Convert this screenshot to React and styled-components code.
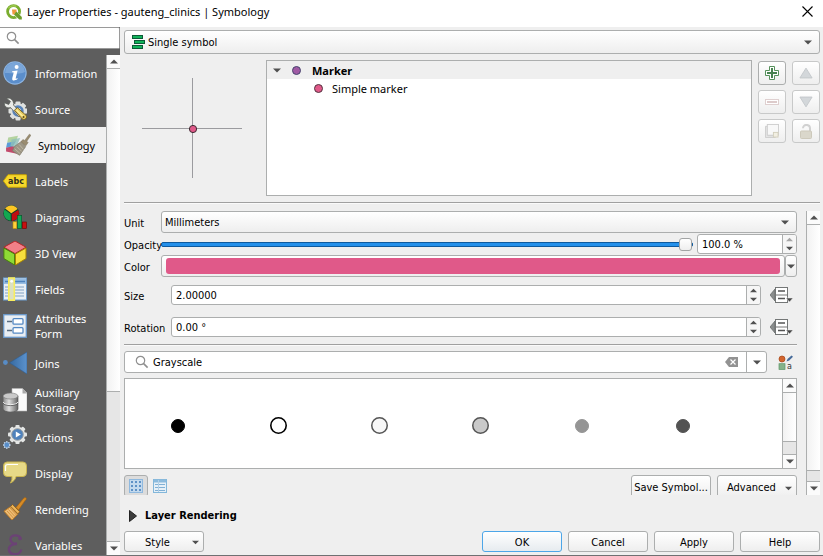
import React from "react";
import styled, { createGlobalStyle, css } from "styled-components";

const UI = '"Noto Sans", "Open Sans", sans-serif';
const FORM = '"DejaVu Sans Condensed", "Noto Sans", sans-serif';
const LINE = "#acaeae";
const FACE = "linear-gradient(#ffffff, #eeeeee)";

const Global = createGlobalStyle`
  *, *::before, *::after { box-sizing: border-box; }
  body { margin: 0; background: #efefef; color: #000; font: 11px/16px ${UI}; }
  button, input, select { font: inherit; color: inherit; margin: 0; }
  svg { display: block; flex: none; }
`;

const Dialog = styled.div`
  display: flex;
  flex-direction: column;
  height: 100vh;
  background: #efefef;
  border-bottom: 1px solid #6f7072;
`;

const TitleBar = styled.header`
  display: flex;
  align-items: center;
  flex: none;
  height: 27px;
  padding: 0 9px 4px 6px;
  gap: 5px;
  background: #fff;
`;

const Title = styled.h1`
  flex: 1;
  margin: 0;
  font-size: 11px;
  font-weight: 400;
`;

const PlainButton = styled.button`
  display: flex;
  align-items: center;
  justify-content: center;
  padding: 0;
  border: 0;
  background: none;
`;

const Body = styled.div`
  display: flex;
  flex: 1;
  min-height: 0;
`;

const Sidebar = styled.aside`
  display: flex;
  flex-direction: column;
  flex: none;
  width: 120px;
  background: #5e5e5e;
`;

const SideSearch = styled.label`
  display: flex;
  align-items: center;
  flex: none;
  height: 22px;
  margin-bottom: 6px;
  padding-left: 6px;
  background: #fff;
  border: 1px solid #9a9a9a;
  border-left: 0;
  border-radius: 0 2px 2px 0;
`;

const BareInput = styled.input`
  flex: 1;
  min-width: 0;
  padding: 2px 0 0;
  border: 0;
  outline: 0;
  background: none;
`;

const NavArea = styled.div`
  display: flex;
  flex: 1;
  min-height: 0;
`;

const NavList = styled.nav`
  flex: 1;
  min-width: 0;
  overflow: hidden;
`;

const NavItem = styled.button`
  display: flex;
  align-items: center;
  gap: ${(p) => (p.$selected ? 7 : 8)}px;
  width: 100%;
  height: ${(p) => (p.$tall ? 38 : 36)}px;
  padding: 0 0 0 ${(p) => (p.$selected ? 5 : 3)}px;
  border: 0;
  background: ${(p) => (p.$selected ? "#f0f0f0" : "transparent")};
  color: ${(p) => (p.$selected ? "#000" : "#fff")};
  line-height: 15px;
  text-align: left;
`;

const NavText = styled.span`
  white-space: pre-line;
`;

const ScrollTrack = styled.div`
  display: flex;
  flex-direction: column;
  flex: none;
  width: 14px;
  background: #e6e6e6;
  border-left: 1px solid ${LINE};
`;

const ScrollStep = styled.button`
  display: flex;
  align-items: center;
  justify-content: center;
  flex: none;
  height: 14px;
  padding: 0;
  border: 0;
  border-${(p) => (p.$down ? "top" : "bottom")}: 1px solid ${LINE};
  background: #fbfbfb;
`;

const ScrollThumb = styled.div`
  flex: ${(p) => p.$grow} 1 0;
  background: linear-gradient(90deg, #f2f2f2, #fff);
  border-bottom: 1px solid ${LINE};
`;

const ScrollRest = styled.div`
  flex: ${(p) => p.$grow} 1 0;
`;

const Main = styled.main`
  display: flex;
  flex-direction: column;
  flex: 1;
  min-width: 0;
  padding: 3px 3px 3px 4px;
  font: 11px/14px ${FORM};
`;

const ComboBox = styled.div`
  display: grid;
  grid-template-columns: 1fr auto;
  align-items: center;
  flex: ${(p) => (p.$grow ? 1 : "none")};
  height: ${(p) => p.$height}px;
  border: 1px solid ${LINE};
  border-radius: 3px;
  background: ${FACE};

  & > * { grid-row: 1; }
`;

const ComboIcon = styled.span`
  grid-column: 1;
  padding-left: 7px;
  pointer-events: none;
`;

const Select = styled.select`
  grid-column: 1 / -1;
  align-self: stretch;
  width: 100%;
  padding: 2px 0 0 ${(p) => (p.$icon ? 23 : 3)}px;
  border: 0;
  outline: 0;
  background: none;
  appearance: none;
`;

const ComboArrow = styled.span`
  grid-column: 2;
  padding-right: 7px;
  pointer-events: none;
`;

const SymbolTop = styled.section`
  display: flex;
  flex: none;
  height: 136px;
  margin: 6px 0;
`;

const Preview = styled.div`
  display: flex;
  align-items: center;
  justify-content: center;
  flex: none;
  width: 142px;
  padding-right: 6px;
`;

const Tree = styled.div`
  flex: 1;
  min-width: 0;
  border: 1px solid ${LINE};
  background: #fff;
  font: 11px/18px ${UI};
`;

const TreeRow = styled.div`
  display: flex;
  align-items: center;
  gap: ${(p) => (p.$child ? 9 : 11)}px;
  height: 18px;
  padding-left: ${(p) => (p.$child ? 47 : 6)}px;
  ${(p) => p.$root && css`background: #efefef; font-weight: 700;`}
`;

const TreeText = styled.span`
  padding-top: 2px;
`;

const ToolGrid = styled.div`
  display: grid;
  grid-template-columns: 28px 28px;
  grid-auto-rows: 24px;
  align-content: start;
  gap: 5px 6px;
  padding: 1px 0 0 6px;
`;

const ToolButton = styled.button`
  display: flex;
  align-items: center;
  justify-content: center;
  padding: 0;
  border: 1px solid ${(p) => (p.disabled ? "#c8c9c9" : LINE)};
  border-radius: 3px;
  background: ${FACE};
`;

const Rule = styled.hr`
  flex: none;
  height: 2px;
  margin: 0;
  border: 0;
  border-top: 1px solid #a0a0a0;
  border-bottom: 1px solid #fafafa;
`;

const ScrollArea = styled.div`
  display: flex;
  flex: 1;
  min-height: 0;
  margin-top: 7px;
  gap: 9px;
`;

const ScrollBody = styled.div`
  display: flex;
  flex-direction: column;
  flex: 1;
  min-width: 0;
  overflow: hidden;
`;

const Field = styled.div`
  display: flex;
  align-items: center;
  flex: none;
  height: ${(p) => p.$height}px;
  margin-bottom: ${(p) => p.$after || 0}px;
`;

const FieldLabel = styled.label`
  flex: none;
  width: ${(p) => (p.$wide ? 47 : 37)}px;
  padding-top: 3px;
  white-space: nowrap;
`;

const Slider = styled.input`
  flex: 1;
  min-width: 0;
  height: 14px;
  margin-right: 4px;
  background: none;
  appearance: none;
  outline: 0;

  &::-webkit-slider-runnable-track {
    height: 5px;
    border: 1px solid #0e5a9e;
    border-radius: 2px;
    background: #2490ea;
  }
  &::-webkit-slider-thumb {
    appearance: none;
    width: 13px;
    height: 13px;
    margin-top: -5px;
    border: 1px solid #a2a4a4;
    border-radius: 3px;
    background: ${FACE};
  }
`;

const Spin = styled.div`
  display: flex;
  flex: ${(p) => (p.$compact ? "none" : 1)};
  width: ${(p) => (p.$compact ? "100px" : "auto")};
  height: 20px;
  border: 1px solid ${LINE};
  border-radius: 3px;
  background: #fff;
  padding-left: 4px;
`;

const SpinSteps = styled.div`
  display: flex;
  flex-direction: column;
  width: 14px;
  border-left: 1px solid ${LINE};
  background: #f6f6f6;
  border-radius: 0 2px 2px 0;
`;

const Step = styled(PlainButton)`
  flex: 1;
`;

const ColorButton = styled.button`
  flex: 1;
  height: 22px;
  padding: 2px 4px;
  border: 1px solid ${LINE};
  border-radius: 3px;
  background: ${FACE};
`;

const Swatch = styled.span`
  display: block;
  height: 16px;
  border-radius: 3px;
  background: #e05989;
`;

const ColorMenu = styled(ToolButton)`
  width: 12px;
  height: 22px;
`;

const OverrideButton = styled(PlainButton)`
  width: 36px;
  padding-left: 5px;
`;

const FilterBox = styled.div`
  display: flex;
  align-items: center;
  flex: 1;
  height: 22px;
  padding-left: 10px;
  gap: 4px;
  border: 1px solid ${LINE};
  border-radius: 3px;
  background: #fff;
`;

const FilterDrop = styled(PlainButton)`
  align-self: stretch;
  width: 20px;
  margin-left: 4px;
  border-left: 1px solid ${LINE};
`;

const StyleManager = styled(PlainButton)`
  width: 30px;
  padding-left: 6px;
`;

const Gallery = styled.div`
  display: flex;
  flex: none;
  height: 91px;
  margin-bottom: 6px;
  border: 1px solid ${LINE};
  background: #fff;
`;

const GalleryGrid = styled.div`
  display: grid;
  grid-template-columns: repeat(auto-fill, 101px);
  flex: 1;
  padding: 4px 2px 0;
`;

const Actions = styled.div`
  display: flex;
  flex: none;
  height: 22px;
`;

const ViewToggle = styled.button`
  display: flex;
  align-items: center;
  justify-content: center;
  width: 24px;
  height: 22px;
  padding: 0;
  border: 1px solid ${(p) => (p.$on ? LINE : "transparent")};
  border-radius: 3px;
  background: ${(p) => (p.$on ? "#dcdcdc" : "none")};
`;

const Spacer = styled.span`
  flex: 1;
`;

const ButtonRow = styled.div`
  display: flex;
  gap: 6px;
`;

const PushButton = styled.button`
  display: flex;
  align-items: center;
  justify-content: center;
  width: 80px;
  height: 21px;
  padding: 2px 0 0;
  border: 1px solid ${(p) => (p.$primary ? "#4da6e8" : LINE)};
  border-radius: 3px;
  background: ${(p) => (p.$primary ? "linear-gradient(#fff, #e6ebef)" : FACE)};
  white-space: nowrap;
`;

const MenuButton = styled(PushButton)`
  justify-content: space-between;
  padding: 2px 4px 0 ${(p) => p.$indent}px;
`;

const CutButton = styled(PushButton)`
  height: 24px;
`;

const CutMenuButton = styled(MenuButton)`
  height: 24px;
`;

const Disclosure = styled.button`
  display: flex;
  align-items: center;
  flex: none;
  gap: 8px;
  height: 36px;
  padding: 5px 0 0 5px;
  border: 0;
  background: none;
`;

const GroupTitle = styled.h2`
  margin: 0;
  font: 700 11px/16px ${FORM};
`;

const Footer = styled.footer`
  display: flex;
  flex: none;
  gap: 6px;
`;

const Arrow = ({ up, faded, small }) => (
  <svg width={small ? 7 : 8} height="5" viewBox="0 0 8 5" aria-hidden="true">
    <path d={up ? "M0 4.5 4 .5 8 4.5Z" : "M0 .5H8L4 4.5Z"} fill={faded ? "#a5a5a5" : "#505050"} />
  </svg>
);

const Magnifier = () => (
  <svg width="14" height="14" viewBox="0 0 14 14" fill="none" stroke="#8f8f8f" aria-hidden="true">
    <circle cx="5.5" cy="5.5" r="4.2" strokeWidth="1.2" />
    <path d="m8.6 8.6 4 4" strokeWidth="1.6" />
  </svg>
);

const Glyph = ({ children, size = 24 }) => (
  <svg width={size} height={size} viewBox="0 0 24 24" aria-hidden="true">{children}</svg>
);

const gear = (cx, cy, r, w) => (
  <g>
    {[0, 45, 90, 135].map((a) => (
      <rect key={a} x={cx - w / 2} y={cy - r} width={w} height={2 * r} rx="1" transform={`rotate(${a} ${cx} ${cy})`} />
    ))}
    <circle cx={cx} cy={cy} r={r - 1.8} />
  </g>
);

const icons = {
  info: (
    <Glyph>
      <circle cx="12" cy="12" r="11.7" fill="#8db4e0" />
      <circle cx="12" cy="12" r="10.6" fill="#5b8ecb" />
      <path d="M2 12a10 10 0 0 1 20-1c-6 3-13 1-20 1Z" fill="#7ba6d8" />
      <circle cx="13.6" cy="6" r="2" fill="#fff" />
      <path d="M9.2 10.2 14.6 9.4 12.7 17.2c-.1.7.5.6 1.8-.2v1.1c-2.7 2.2-6 2-5.2-1.1l1.3-5c.2-.8-.2-1-1.6-.8Z" fill="#fff" />
    </Glyph>
  ),
  source: (
    <Glyph>
      <g fill="#dfe1df">{gear(15, 14, 9.5, 5)}</g>
      <circle cx="15" cy="14" r="5.7" fill="#5783ba" />
      <circle cx="15" cy="14" r="3" fill="#ececec" />
      <path d="M3.6 1.4 7.4 4.4 5.7 7.4 1.5 5.8C.4 8.8 4 12 7.5 10.5L16 20l3-2.8L10.5 8C11.5 4 7.3-.2 3.6 1.4Z" fill="#e9eae7" stroke="#565a55" strokeWidth=".8" />
      <path d="m11.4 13.2 3-2.5 8.8 7.8c1.3 2.5-1.3 5.1-4 3.4Z" fill="#ebcf65" stroke="#705b18" strokeWidth=".9" />
      <path d="m13.5 13 7 7" stroke="#fff0a0" strokeWidth="1.3" />
      <circle cx="20.5" cy="20" r="1" fill="#5f4d1b" />
    </Glyph>
  ),
  symbology: (
    <Glyph size={26}>
      <path d="M3 5 12 3.5 10 9 2 10Z" fill="#b4d3a0" />
      <path d="M2 10 10 8.5 7 14 1 14.5Z" fill="#5b9bd8" />
      <path d="M1 14.5 8 13 11 20 1 18Z" fill="#c34a6c" />
      <path d="M6 7 14 5.5 10.5 14 5 13Z" fill="#8fc1b8" opacity=".8" />
      <path d="m8.5 13.5 7-5 3.5 5-5.500 8-6.500-4Z" fill="#9d9685" stroke="#827c6b" strokeWidth=".7" />
      <path d="m9 15.500 5 4.500m-3-6.500 4.500 4.500m-2.500-6.500 4 4.500" stroke="#c9c2ad" strokeWidth=".7" />
      <path d="M14.8 9 16.5 7l1.700.8L22.500 2l1.400 1-3.800 5.500 1.200 1.200-2 3Z" fill="#9a8c70" stroke="#80765f" strokeWidth=".5" />
    </Glyph>
  ),
  labels: (
    <Glyph>
      <path d="M.4 12 5 5.7H23q.8 0 .8.8v11q0 .8-.8.8H5Z" fill="#f5d72b" stroke="#c7a300" strokeWidth=".9" />
      <text x="5" y="15" fontFamily="DejaVu Sans" fontSize="8" fontWeight="700" fill="#2e2d20">abc</text>
    </Glyph>
  ),
  diagrams: (
    <Glyph>
      <circle cx="8.3" cy="8.3" r="8" fill="#123d2c" />
      <path d="M8.3 8.3 2.1 3.5A7.6 7.6 0 0 1 14.6 4Z" fill="#fbc624" />
      <path d="M7.7 9V15.7A7.6 7.6 0 0 1 1.6 4.5Z" fill="#13a750" />
      <path d="M8.8 9 15.2 5A7.6 7.6 0 0 1 8.8 15.9Z" fill="#c00d11" />
      <rect x="10" y="16.8" width="3.8" height="6.8" fill="#ffd13c" stroke="#bb8d00" strokeWidth=".6" />
      <rect x="14.5" y="10.5" width="4.2" height="13" fill="#14a754" stroke="#00552b" strokeWidth=".6" />
      <rect x="19.3" y="17" width="4.2" height="6.5" fill="#c71111" stroke="#6d0000" strokeWidth=".6" />
    </Glyph>
  ),
  cube: (
    <Glyph>
      <path d="M12 0 23 6.2 12 12.6.9 6.2Z" fill="#f28088" stroke="#b3272a" />
      <path d="M.9 7 11.6 13V24L.9 17.6Z" fill="#8edb35" stroke="#487e0d" />
      <path d="M23 7 12.5 13V24L23 17.6Z" fill="#f6df3d" stroke="#a98500" />
    </Glyph>
  ),
  fields: (
    <Glyph>
      <rect x=".5" y="1" width="23" height="22" fill="#e9eff5" stroke="#6d9dcf" />
      <rect x="1" y="1.5" width="22" height="5.5" fill="#97bde3" />
      <path d="M2 4.5h4m6 0h10" stroke="#4f83bd" strokeWidth="1.4" />
      <path d="M2 10h4m6 0h9M2 13h4m6 0h9M2 16h4m6 0h9M2 19h4m6 0h9" stroke="#81a2c4" strokeWidth="1.2" />
      <rect x="5.8" y="1" width="5.5" height="22.2" fill="#dce0c2" stroke="#f8ed5d" strokeWidth="1.6" />
      <circle cx="8.7" cy="4.3" r="1.4" fill="#fff" />
    </Glyph>
  ),
  form: (
    <Glyph>
      <rect x=".7" y=".7" width="22.6" height="22.6" fill="#e9eef3" stroke="#6a99cb" strokeWidth="1.3" />
      <path d="M4 7.5h5M4 16.5h5" stroke="#5a6d80" strokeWidth="1.6" />
      <rect x="10" y="4.7" width="10" height="5.5" rx="1" fill="#fff" stroke="#5388c3" strokeWidth="1.3" />
      <rect x="10" y="13.7" width="10" height="5.5" rx="1" fill="#fff" stroke="#5388c3" strokeWidth="1.3" />
    </Glyph>
  ),
  joins: (
    <Glyph>
      <defs><linearGradient id="join"><stop stopColor="#36699f" /><stop offset="1" stopColor="#5b92ce" /></linearGradient></defs>
      <circle cx="2.4" cy="11.5" r="2.4" fill="#588cc5" />
      <path d="M6.5 11.7 24 1V23Z" fill="url(#join)" stroke="#305e91" strokeWidth=".6" />
    </Glyph>
  ),
  storage: (
    <Glyph>
      <path d="M9 .5H19.5L24 5V23H9Z" fill="#fafafa" stroke="#b6b6b6" strokeWidth=".6" />
      <path d="M19.5.5V5.5H24Z" fill="#aaa" />
      <defs><linearGradient id="disk"><stop stopColor="#898989" /><stop offset=".4" stopColor="#dedede" /><stop offset="1" stopColor="#646464" /></linearGradient></defs>
      <path d="M0 8v13c0 4 15 4 15 0V8Z" fill="url(#disk)" stroke="#4b4b4b" strokeWidth=".6" />
      <ellipse cx="7.5" cy="8" rx="7.5" ry="3" fill="#c9c9c9" stroke="#777" strokeWidth=".6" />
      <path d="M0 14c1 3.5 14 3.5 15 0" fill="none" stroke="#eee" />
      <path d="M0 15c1 3.5 14 3.5 15 0" fill="none" stroke="#555" strokeWidth=".8" />
    </Glyph>
  ),
  actions: (
    <Glyph>
      <g fill="#e4e6e5">{gear(14.5, 9.5, 9.5, 4.2)}</g>
      <circle cx="14.5" cy="9.5" r="5.8" fill="#4f82bc" stroke="#9b9fa1" />
      <path d="m12.8 6.5 5 3-5 3Z" fill="#fff" />
      <g fill="#b9d1eb">{gear(3.8, 20, 3.9, 1.8)}</g>
      <circle cx="3.8" cy="20" r="2.4" fill="#588dc8" />
    </Glyph>
  ),
  display: (
    <Glyph>
      <path d="M4 1H20q3.5 0 3.5 4v6.5q0 4-3.5 4h-7c-.5 3-2.5 5-5.5 6.5q2-3 1.5-6.5H4q-3.5 0-3.5-4V5Q.5 1 4 1Z" fill="#e7d987" stroke="#c8b34e" />
      <path d="M2.5 10V5.5q0-2 2.5-2h10" fill="none" stroke="#fff" strokeWidth="1.2" />
    </Glyph>
  ),
  rendering: (
    <Glyph>
      <path d="M13 10.5 20.7 1.2q1.6-1.3 2.7.3-.1 1.3-1.4 2.2L15.5 13Z" fill="#d68b26" stroke="#aa6106" strokeWidth=".6" />
      <path d="m9.5 7.5 7.2 7.3-1.8 2L7.7 9.4Z" fill="#ebb65d" stroke="#8d5407" strokeWidth=".7" />
      <path d="m7.4 9.8 7.2 7.4L9 23 1 14.2Z" fill="#edbd77" stroke="#be7b23" />
      <path d="m5.4 12.4 6.5 7.1m-8-5.7 6.5 7.3M7 11l6.4 7" stroke="#c78127" strokeWidth=".7" />
    </Glyph>
  ),
  variables: (
    <Glyph>
      <path d="M17.5 5.5C16.5 1.500 8 1 7.500 6c-.2 3.200 2.500 5 6.500 4.800-5.500.2-8.500 2.500-8 6.200.8 5.500 10.500 5.500 12 .5" fill="none" stroke="#6b4275" strokeWidth="2.400" strokeLinecap="round" />
      <circle cx="17" cy="5.500" r="1.800" fill="#6b4275" />
    </Glyph>
  ),
};

const QgisLogo = () => (
  <svg width="16" height="16" viewBox="0 0 16 16" aria-hidden="true">
    <circle cx="7.6" cy="7.6" r="6" fill="none" stroke="#7aad2e" strokeWidth="2.8" />
    <path d="M2.500 4.500A6 6 0 0 1 10.500 2.400" fill="none" stroke="#9dc84e" strokeWidth="1.5" />
    <path d="m10.500 10.500 5 5" stroke="#fff" strokeWidth="4.4" />
    <path d="m8.500 8.500 2-1 5.300 5.500v2.600h-2.600L8 10.500Z" fill="#6c9d2b" />
    <path d="M6 5.500h4.500v1.700L8 10.500H6.500Z" fill="#ee9b3e" />
  </svg>
);

const Dot = ({ size, fill, stroke, width = 1 }) => (
  <svg width={size} height={size} viewBox={`0 0 ${size} ${size}`} aria-hidden="true">
    <circle cx={size / 2} cy={size / 2} r={(size - width) / 2} fill={fill} stroke={stroke} strokeWidth={width} />
  </svg>
);

const Override = () => (
  <svg width="23" height="18" viewBox="0 0 23 18" aria-hidden="true">
    <path d="M5 3v12L0 9Z" fill="#8a8d8d" stroke="#626565" strokeWidth=".7" />
    <rect x="5.5" y="1.5" width="12" height="15" fill="#fff" stroke="#747777" />
    <path d="M8 5h7M8 12.5h7" stroke="#555" strokeWidth="1.4" />
    <path d="M6 9h11" stroke="#777" />
    <path d="M16 12h7l-3.5 4Z" fill="#484848" stroke="#efefef" strokeWidth=".5" />
  </svg>
);

const tools = {
  add: <svg width="14" height="14" viewBox="0 0 14 14"><path d="M4.5.5h5v4h4v5h-4v4h-5v-4h-4v-5h4Z" fill="#fff" stroke="#56915b" /><path d="M7 2v10M2 7h10" stroke="#478250" strokeWidth="2" /></svg>,
  up: <svg width="14" height="12" viewBox="0 0 15 12"><path d="M7.5.8 14 11.3H1Z" fill="#d3d7da" stroke="#c3c7ca" /></svg>,
  remove: <svg width="14" height="6" viewBox="0 0 14 6"><rect x=".5" y=".5" width="13" height="5" fill="#fff" stroke="#dfd0d0" /><path d="M2 3h10" stroke="#ddcbcb" strokeWidth="2" /></svg>,
  down: <svg width="14" height="12" viewBox="0 0 15 12"><path d="M1 .7h13L7.5 11.2Z" fill="#d3d7da" stroke="#c3c7ca" /></svg>,
  copy: <svg width="14" height="14" viewBox="0 0 15 15"><path d="M.5 2.5h3v10H11v2H.5Z" fill="#e4e4e4" stroke="#ccc" /><rect x="2.5" y=".5" width="12" height="11.5" fill="#f8f8f8" stroke="#cecece" /><rect x="9" y="9" width="5" height="5" fill="#f2efe2" stroke="#d3cfbd" /></svg>,
  lock: <svg width="14" height="15" viewBox="0 0 14 15"><path d="M4 4.2C4-.2 11-.2 11 4.5V8" fill="none" stroke="#d1d1d1" strokeWidth="2" /><rect x="1.5" y="7" width="11" height="7.5" rx="1" fill="#dad7cb" stroke="#cdc9bb" /></svg>,
};

const nav = [
  ["Information", "info"],
  ["Source", "source"],
  ["Symbology", "symbology"],
  ["Labels", "labels"],
  ["Diagrams", "diagrams"],
  ["3D View", "cube"],
  ["Fields", "fields"],
  ["Attributes\nForm", "form"],
  ["Joins", "joins"],
  ["Auxiliary\nStorage", "storage"],
  ["Actions", "actions"],
  ["Display", "display"],
  ["Rendering", "rendering"],
  ["Variables", "variables"],
];

const symbols = [
  { name: "dot black", size: 14, fill: "#000", stroke: "#000" },
  { name: "circle black", size: 17, fill: "#fff", stroke: "#000", width: 1.6 },
  { name: "circle white", size: 17, fill: "#f7f7f7", stroke: "#555", width: 1.5 },
  { name: "circle gray", size: 17, fill: "#c9c9c9", stroke: "#555", width: 1.5 },
  { name: "dot gray", size: 14, fill: "#959595", stroke: "#959595" },
  { name: "dot dark", size: 14, fill: "#535353", stroke: "#535353" },
];

const Scrollbar = ({ before, after }) => (
  <ScrollTrack>
    <ScrollStep aria-label="Scroll up"><Arrow up /></ScrollStep>
    <ScrollThumb $grow={before} />
    <ScrollRest $grow={after} />
    <ScrollStep $down aria-label="Scroll down"><Arrow /></ScrollStep>
  </ScrollTrack>
);

const SpinBox = ({ id, value, compact }) => (
  <Spin $compact={compact}>
    <BareInput id={id} aria-label={compact ? "Opacity percent" : undefined} defaultValue={value} />
    <SpinSteps>
      <Step aria-label="Increase"><Arrow up small faded={compact} /></Step>
      <Step aria-label="Decrease"><Arrow small /></Step>
    </SpinSteps>
  </Spin>
);

export default function App() {
  return (
    <Dialog>
      <Global />
      <TitleBar>
        <QgisLogo />
        <Title>Layer Properties - gauteng_clinics | Symbology</Title>
        <PlainButton aria-label="Close">
          <svg width="13" height="13" viewBox="0 0 13 13"><path d="m1.5 1.5 10 10m0-10-10 10" stroke="#000" strokeWidth="1.1" /></svg>
        </PlainButton>
      </TitleBar>
      <Body>
        <Sidebar>
          <SideSearch><Magnifier /><BareInput aria-label="Search settings" /></SideSearch>
          <NavArea>
            <NavList>
              {nav.map(([text, icon]) => (
                <NavItem key={text} $tall={text.includes("\n")} $selected={icon === "symbology"}>
                  {icons[icon]}
                  <NavText>{text}</NavText>
                </NavItem>
              ))}
            </NavList>
            <Scrollbar before={323} after={150} />
          </NavArea>
        </Sidebar>
        <Main>
          <ComboBox $height={24}>
            <ComboIcon>
              <svg width="14" height="14" viewBox="0 0 14 14" fill="#10b259" stroke="#0b5a37">
                <rect x=".5" y=".5" width="10" height="3" />
                <rect x="2.5" y="5.5" width="10" height="3" />
                <rect x=".5" y="10.5" width="10" height="3" />
              </svg>
            </ComboIcon>
            <Select $icon aria-label="Renderer"><option>Single symbol</option></Select>
            <ComboArrow><Arrow /></ComboArrow>
          </ComboBox>
          <SymbolTop>
            <Preview>
              <svg width="101" height="101" viewBox="0 0 101 101" aria-label="Symbol preview">
                <path d="M50.5 0v100M0 50.5h100" stroke="#9b9b9f" />
                <circle cx="51" cy="51" r="3.6" fill="#e05989" stroke="#3c2a31" />
              </svg>
            </Preview>
            <Tree role="tree">
              <TreeRow $root role="treeitem"><Arrow /><Dot size={9} fill="#a05aa4" stroke="#46466e" /><TreeText>Marker</TreeText></TreeRow>
              <TreeRow $child role="treeitem"><Dot size={9} fill="#e05989" stroke="#523440" /><TreeText>Simple marker</TreeText></TreeRow>
            </Tree>
            <ToolGrid>
              <ToolButton aria-label="Add symbol layer">{tools.add}</ToolButton>
              <ToolButton disabled aria-label="Move up">{tools.up}</ToolButton>
              <ToolButton disabled aria-label="Remove symbol layer">{tools.remove}</ToolButton>
              <ToolButton disabled aria-label="Move down">{tools.down}</ToolButton>
              <ToolButton disabled aria-label="Duplicate">{tools.copy}</ToolButton>
              <ToolButton disabled aria-label="Lock color">{tools.lock}</ToolButton>
            </ToolGrid>
          </SymbolTop>
          <Rule />
          <ScrollArea>
            <ScrollBody>
              <Field $height={22} $after={1}>
                <FieldLabel htmlFor="unit">Unit</FieldLabel>
                <ComboBox $grow $height={22}>
                  <Select id="unit"><option>Millimeters</option></Select>
                  <ComboArrow><Arrow /></ComboArrow>
                </ComboBox>
              </Field>
              <Field $height={20} $after={1}>
                <FieldLabel htmlFor="opacity">Opacity</FieldLabel>
                <Slider id="opacity" type="range" min="0" max="100" defaultValue="100" />
                <SpinBox compact value="100.0 %" />
              </Field>
              <Field $height={22} $after={8}>
                <FieldLabel htmlFor="color">Color</FieldLabel>
                <ColorButton id="color"><Swatch /></ColorButton>
                <ColorMenu aria-label="Color menu"><Arrow /></ColorMenu>
              </Field>
              <Field $height={20} $after={12}>
                <FieldLabel $wide htmlFor="size">Size</FieldLabel>
                <SpinBox id="size" value="2.00000" />
                <OverrideButton aria-label="Size override"><Override /></OverrideButton>
              </Field>
              <Field $height={20} $after={7}>
                <FieldLabel $wide htmlFor="rotation">Rotation</FieldLabel>
                <SpinBox id="rotation" value="0.00 °" />
                <OverrideButton aria-label="Rotation override"><Override /></OverrideButton>
              </Field>
              <Rule />
              <Field $height={32}>
                <FilterBox>
                  <Magnifier />
                  <BareInput aria-label="Filter symbols" defaultValue="Grayscale" />
                  <PlainButton aria-label="Clear">
                    <svg width="13" height="10" viewBox="0 0 13 10"><path d="M4 0h9v10H4L0 5Z" fill="#929292" /><path d="m5.5 2.5 5 5m0-5-5 5" stroke="#fff" strokeWidth="1.2" /></svg>
                  </PlainButton>
                  <FilterDrop aria-label="Symbol groups"><Arrow /></FilterDrop>
                </FilterBox>
                <StyleManager aria-label="Style manager">
                  <svg width="15" height="15" viewBox="0 0 15 15">
                    <circle cx="4" cy="4" r="3" fill="#d2642e" stroke="#a44516" strokeWidth=".7" />
                    <path d="m8.5 6.5 1-2.4L13.5.6 15 1.8l-3.8 3.6Z" fill="#466b9a" />
                    <rect x="1" y="8.7" width="6" height="5.8" fill="#85b28a" stroke="#5d9667" strokeWidth=".7" />
                    <text x="9" y="14" fontFamily="DejaVu Sans" fontSize="8" fill="#333">a</text>
                  </svg>
                </StyleManager>
              </Field>
              <Gallery>
                <GalleryGrid>
                  {symbols.map(({ name, ...s }) => <PlainButton key={name} aria-label={name}><Dot {...s} /></PlainButton>)}
                </GalleryGrid>
                <Scrollbar before={50} after={12} />
              </Gallery>
              <Actions>
                <ViewToggle $on aria-label="Icon view">
                  <svg width="14" height="14" viewBox="0 0 14 14">
                    <rect x=".5" y=".5" width="13" height="13" fill="#c3d9ed" stroke="#8fb9df" />
                    <path d="M3 2v10M7 2v10M11 2v10" stroke="#5e91c6" strokeWidth="2" strokeDasharray="2" />
                  </svg>
                </ViewToggle>
                <ViewToggle aria-label="List view">
                  <svg width="14" height="14" viewBox="0 0 14 14">
                    <rect x=".5" y=".5" width="13" height="13" fill="#e6f0f7" stroke="#83b7da" />
                    <path d="M1 2h12" stroke="#8cbbdd" strokeWidth="3" />
                    <path d="M2 5.5h3m1 0h6M2 8.5h3m1 0h6M2 11.5h3m1 0h6" stroke="#80b0d5" />
                    <path d="M5.5 1v12" stroke="#b3d0e7" />
                  </svg>
                </ViewToggle>
                <Spacer />
                <ButtonRow>
                  <CutButton>Save Symbol...</CutButton>
                  <CutMenuButton $indent={9}>Advanced<Arrow small /></CutMenuButton>
                </ButtonRow>
              </Actions>
            </ScrollBody>
            <Scrollbar before={246} after={10} />
          </ScrollArea>
          <Disclosure>
            <svg width="8" height="12" viewBox="0 0 8 12"><path d="M.5.5 7.5 6 .5 11.5Z" fill="#3c3c3c" stroke="#222" /></svg>
            <GroupTitle>Layer Rendering</GroupTitle>
          </Disclosure>
          <Footer>
            <MenuButton $indent={20}>Style<Arrow small /></MenuButton>
            <Spacer />
            <PushButton $primary>OK</PushButton>
            <PushButton>Cancel</PushButton>
            <PushButton>Apply</PushButton>
            <PushButton>Help</PushButton>
          </Footer>
        </Main>
      </Body>
    </Dialog>
  );
}
